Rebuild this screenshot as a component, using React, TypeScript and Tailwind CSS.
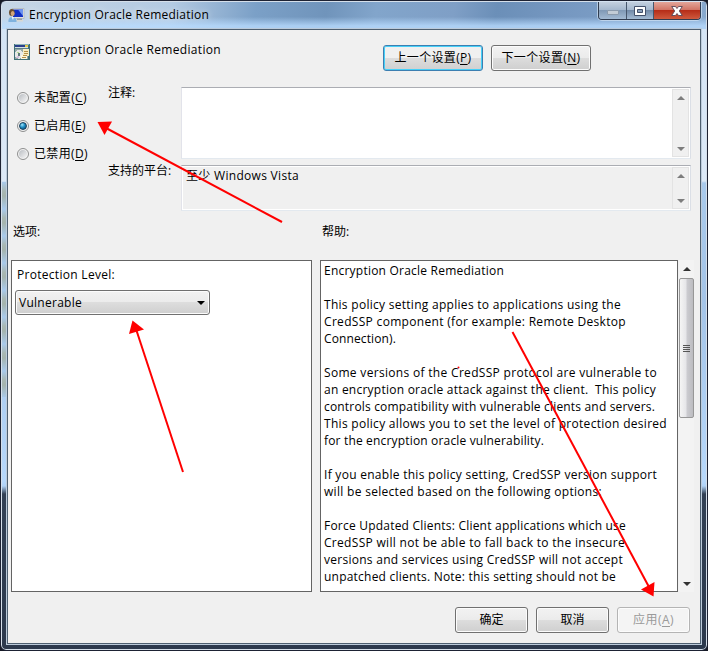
import { useLayoutEffect, useRef, useState, type ReactNode } from "react";
import clsx from "clsx";

const helpLines = [
  { text: "Encryption Oracle Remediation", width: 180 },
  { text: "", width: 0 },
  { text: "This policy setting applies to applications using the", width: 297 },
  { text: "CredSSP component (for example: Remote Desktop", width: 302 },
  { text: "Connection).", width: 72 },
  { text: "", width: 0 },
  { text: "Some versions of the CredSSP protocol are vulnerable to", width: 333 },
  { text: "an encryption oracle attack against the client.  This policy", width: 332 },
  { text: "controls compatibility with vulnerable clients and servers.", width: 331 },
  { text: "This policy allows you to set the level of protection desired", width: 343 },
  { text: "for the encryption oracle vulnerability.", width: 220 },
  { text: "", width: 0 },
  { text: "If you enable this policy setting, CredSSP version support", width: 333 },
  { text: "will be selected based on the following options:", width: 278 },
  { text: "", width: 0 },
  { text: "Force Updated Clients: Client applications which use", width: 302 },
  { text: "CredSSP will not be able to fall back to the insecure", width: 301 },
  { text: "versions and services using CredSSP will not accept", width: 299 },
  { text: "unpatched clients. Note: this setting should not be", width: 292 },
];

const states = [
  { label: "未配置", hotkey: "C", width: 53 },
  { label: "已启用", hotkey: "E", width: 52 },
  { label: "已禁用", hotkey: "D", width: 54 },
];

// Tracks the text out (or in) until it fills the given width
function FitText({ width, children }: { width: number; children: ReactNode }) {
  const ref = useRef<HTMLSpanElement>(null);
  const [spacing, setSpacing] = useState(0);

  useLayoutEffect(() => {
    const el = ref.current;
    if (!el || !width) return;
    el.style.letterSpacing = "0px";
    const natural = el.getBoundingClientRect().width;
    setSpacing((width - natural) / (el.textContent?.length || 1));
  }, [width]);

  return (
    <span ref={ref} className="inline-block whitespace-pre" style={{ letterSpacing: `${spacing}px` }}>
      {children}
    </span>
  );
}

function Hotkey({ children }: { children: string }) {
  return (
    <>
      (<span className="underline underline-offset-2">{children}</span>)
    </>
  );
}

function PushButton({
  children,
  className,
  focused,
  disabled,
}: {
  children: ReactNode;
  className?: string;
  focused?: boolean;
  disabled?: boolean;
}) {
  return (
    <button
      disabled={disabled}
      className={clsx(
        "flex h-[26px] items-center justify-center rounded-[3px] border pb-px",
        disabled && "border-[#b4b4b4] bg-[#f4f4f4] text-[#9a9a9a] shadow-[inset_0_0_0_1px_#fcfcfc]",
        focused &&
          "border-[#3c7fb1] bg-[linear-gradient(#f0f0f0_50%,#dddddd_50%,#d0d0d0)] shadow-[inset_0_0_0_1px_#46d0f8]",
        !disabled &&
          !focused &&
          "border-[#707070] bg-[linear-gradient(#f2f2f2,#ebebeb_50%,#dddddd_50%,#cfcfcf)] shadow-[inset_0_0_0_1px_#fcfcfc]",
        className
      )}
    >
      {children}
    </button>
  );
}

function Arrow({ down, faded }: { down?: boolean; faded?: boolean }) {
  return (
    <svg width="8" height="4" viewBox="0 0 8 4" fill={faded ? "#7d7d7d" : "#333333"}>
      <path d={down ? "M0 0h8L4 4z" : "M0 4h8L4 0z"} />
    </svg>
  );
}

function TextBox({ className, children }: { className: string; children?: ReactNode }) {
  return (
    <div
      className={clsx(
        "flex w-[510px] justify-between border border-t-[#abadb3] border-r-[#dbdfe6] border-b-[#e3e9ef] border-l-[#e2e3ea] shadow-[inset_0_0_0_1px_#ffffff]",
        className
      )}
    >
      <div className="pt-px pl-1">{children}</div>
      <div className="m-px flex w-[17px] flex-col items-center justify-between border border-[#e3e3e3] bg-[#f0f0f0] pt-[6px] pb-[5px]">
        <Arrow faded />
        <Arrow down faded />
      </div>
    </div>
  );
}

function Radio({ checked }: { checked: boolean }) {
  return (
    <span className="flex size-3 items-center justify-center rounded-full border border-[#8e8f8f] bg-[#f4f4f4]">
      <span
        className={clsx(
          "rounded-full",
          checked
            ? "size-2 border border-[#173f5c] bg-[radial-gradient(circle_at_35%_30%,#9fe5fb,#1b8cc4_45%,#0b3d63)]"
            : "size-2 bg-[linear-gradient(135deg,#b9bdc2,#f6f6f6)]"
        )}
      />
    </span>
  );
}

function ComputerIcon() {
  return (
    <svg width="17" height="15" viewBox="0 0 17 15">
      <path d="M4 .5h12v10H4z" fill="#e4e4e0" stroke="#a8acb0" strokeWidth=".6" />
      <path d="M5 1.500h10v7.500H5z" fill="#1230c4" />
      <path d="M10 1.500h5V8z" fill="#6c93f0" />
      <path d="M9 10.500h5v1.500H9z" fill="#9aa0a4" />
      <path d="M8 12h7v1.500H8z" fill="#d8d8d2" />
      <ellipse cx="3.800" cy="4.500" rx="2.800" ry="3.500" fill="#6a4e30" />
      <ellipse cx="4.700" cy="5.500" rx="1.900" ry="2.600" fill="#d3a678" />
      <path d="M.5 14c-.5-3 1-5 3.500-5s5 2 4.500 5z" fill="#7fb2de" />
      <path d="M3.500 9l1.500 3L6 9z" fill="#eef6fc" />
    </svg>
  );
}

function PolicyIcon() {
  return (
    <svg width="16" height="16" viewBox="0 0 16 16" shapeRendering="crispEdges">
      <path d="M0 0h16v16H0z" fill="#3f6f78" />
      <path d="M1 0h14v1H1z" fill="#8fb4b8" />
      <path d="M1 1h10v2H1z" fill="#2b3f8c" />
      <path d="M11 1h3v2h-3z" fill="#e4c948" />
      <path d="M1 3h13v1H1z" fill="#d5e2e4" />
      <path d="M1 4h13v1H1z" fill="#5d7f88" />
      <path d="M1 5h13v10H1z" fill="#94a8a6" />
      <circle cx="5" cy="10.500" r="4.300" fill="#e6e8e8" />
      <path d="M5 10.500L2 7.500h3z" fill="#b4dc92" />
      <path d="M5 10.500l-3 3h3z" fill="#d4bede" />
      <circle cx="5" cy="10.500" r="1.300" fill="#5f7a7c" />
      <path d="M9 5h6v7H9z" fill="#f8edc0" />
      <path d="M7 11h6v4H7z" fill="#fdf7dc" />
      <path d="M10 7h4v1h-4zM10 9h4v1h-4zM9 11h4v1H9zM8 13h4v1H8z" fill="#b58f48" />
    </svg>
  );
}

function TitleBar() {
  return (
    <div className="flex h-[27px] items-start justify-between bg-[linear-gradient(to_bottom,transparent_55%,#b9dcffcc_88%),linear-gradient(100deg,#c6d6e6_0%,#b3cae2_24%,#7ba0c7_36%,#7094bb_46%,#82a5cb_53%,#7f9fc6_64%,#6b8fb8_70%,#7698c1_80%,#88a9ce_100%)]">
      <div className="flex items-center gap-1 pt-[3px] pl-[6px]">
        <ComputerIcon />
        <span className="leading-5 [text-shadow:0_0_6px_#ffffffcc]">
          <FitText width={180}>Encryption Oracle Remediation</FitText>
        </span>
      </div>
      <div className="mr-[5px] flex h-[18px] overflow-hidden rounded-b-[4px] border border-t-0 border-[#303c50] shadow-[0_0_0_1px_#d3e4f5aa]">
        <button className="flex w-[28px] items-end justify-center border-r border-[#46566c] bg-[linear-gradient(#c3d0df,#a5b8ce_45%,#7f98b5_48%,#a3bad3)] pb-1">
          <span className="h-[5px] w-[12px] rounded-[1px] border border-[#8b9aac] bg-[#c3ccd6]" />
        </button>
        <button className="flex w-[27px] items-center justify-center border-r border-[#46566c] bg-[linear-gradient(#c3d0df,#a5b8ce_45%,#7088a6_48%,#a3bad3)]">
          <svg width="12" height="10" viewBox="0 0 12 10">
            <path d="M.5.5h11v9H.5z" fill="#fff" stroke="#43506a" />
            <path d="M3.500 3.500h5v3h-5z" fill="#8ba0bb" stroke="#43506a" />
          </svg>
        </button>
        <button className="flex w-[46px] items-center justify-center bg-[linear-gradient(#e3a69a,#d27566_45%,#b52c17_48%,#cf5a3e)]">
          <svg width="12" height="10" viewBox="0 0 12 10">
            <path
              d="M.7.5h3.800L6 2.500 7.500.5h3.800L8.300 5l3 4.500H7.500L6 7.500l-1.500 2H.7l3-4.500z"
              fill="#fff"
              stroke="#5a4656"
              strokeWidth=".9"
            />
          </svg>
        </button>
      </div>
    </div>
  );
}

// Red pointers drawn over the dialog
function Pointers() {
  return (
    <svg
      className="pointer-events-none absolute inset-0"
      width="708"
      height="651"
      viewBox="0 0 708 651"
      fill="#ff0000"
      stroke="#ff0000"
    >
      <g strokeWidth="2">
        <path d="M282 222L106 128" />
        <path d="M183 472L136 329" />
        <path d="M512.500 332L649 587" />
      </g>
      <g stroke="none">
        <path d="M97.500 122l14.500-.5-7.500 13.500z" />
        <path d="M132.500 320.500l11.500 9-15 4.500z" />
        <path d="M653.500 596.500l-12.500-7 13.500-7.500z" />
        <circle cx="458.500" cy="367.500" r="1" />
      </g>
    </svg>
  );
}

export default function App() {
  return (
    <div className="relative h-[651px] w-[708px] bg-[#161a26] font-['Open_Sans','Noto_Sans_CJK_SC',sans-serif] text-[12px] leading-[17px] text-black">
      <div className="flex h-[651px] flex-col overflow-hidden rounded-[6px] border border-[#1d2233] bg-[linear-gradient(#d3e3f4_0px,#dce9f7_180px,#a9caec_182px,#a4c4e8_300px,#b7d8fb_480px,#b0d2f6_485px,#334155_493px,#2c394d_100%)] shadow-[inset_0_0_0_1px_#d5dfea]">
        <div className="mx-px mt-px">
          <TitleBar />
        </div>
        <div className="flex h-[615px] pr-[6px]">
          {/* mottled glass on the left edge */}
          <div className="mt-[153px] ml-px h-[215px] w-[5px] shrink-0 bg-[repeating-linear-gradient(#a9caec_0px,#a9b8b4_9px,#a5b4ae_14px,#a9caec_27px)]" />
          <div className="flex flex-1 flex-col border border-[#4e5f70] bg-[#f0f0f0] shadow-[0_0_0_1px_#bccbdb]">
            <div className="flex pt-[15px] pl-[6px]">
              <div className="-mt-px">
                <PolicyIcon />
              </div>
              <div className="-mt-1 w-[353px] pl-2">
                <FitText width={183}>Encryption Oracle Remediation</FitText>
              </div>
              <div className="flex gap-2">
                <PushButton focused className="w-[100px]">
                  <FitText width={77}>
                    上一个设置
                    <Hotkey>P</Hotkey>
                  </FitText>
                </PushButton>
                <PushButton className="w-[100px]">
                  <FitText width={79}>
                    下一个设置
                    <Hotkey>N</Hotkey>
                  </FitText>
                </PushButton>
              </div>
            </div>

            <div className="mt-4 flex">
              <div className="flex w-[92px] flex-col gap-[11px] pt-[2px] pl-[9px]">
                {states.map((s) => (
                  <label key={s.hotkey} className="flex items-center gap-[5px]">
                    <Radio checked={s.hotkey === "E"} />
                    <FitText width={s.width}>
                      {s.label}
                      <Hotkey>{s.hotkey}</Hotkey>
                    </FitText>
                  </label>
                ))}
              </div>
              <div className="flex flex-col gap-[6px] pl-2">
                <div className="flex">
                  <div className="-mt-[3px] w-[73px]">注释:</div>
                  <TextBox className="h-[72px] bg-white" />
                </div>
                <div className="flex">
                  <div className="-mt-[3px] w-[73px]">支持的平台:</div>
                  <TextBox className="h-[46px]">
                    <FitText width={113}>至少 Windows Vista</FitText>
                  </TextBox>
                </div>
              </div>
            </div>

            <div className="mt-3 flex pl-[5px]">
              <div className="w-[309px]">选项:</div>
              <div>帮助:</div>
            </div>

            <div className="mt-5 flex h-[332px] pl-[3px]">
              <div className="mr-2 w-[301px] border border-[#646464] bg-white pt-[5px] pl-[3px]">
                <div className="pl-[2px]">
                  <FitText width={98}>Protection Level:</FitText>
                </div>
                <div className="mt-[7px] flex h-[25px] w-[195px] items-center justify-between rounded-[3px] border border-[#707070] bg-[linear-gradient(#f2f2f2,#ebebeb_50%,#dddddd_50%,#cfcfcf)] px-[3px] shadow-[inset_0_0_0_1px_#fcfcfc]">
                  <FitText width={63}>Vulnerable</FitText>
                  <svg className="mr-px" width="8" height="4" viewBox="0 0 8 4">
                    <path d="M0 0h8L4 4z" />
                  </svg>
                </div>
              </div>
              <div className="w-[358px] overflow-hidden border border-[#646464] bg-white pt-px pl-[3px]">
                {helpLines.map((line, i) => (
                  <div key={i} className="h-[17px]">
                    <FitText width={line.width}>{line.text}</FitText>
                  </div>
                ))}
              </div>
              <div className="ml-px flex w-[15px] flex-col items-center bg-[#f3f3f3] pt-[7px] pb-[6px]">
                <Arrow />
                <div className="mt-[7px] flex h-[140px] w-[15px] flex-col items-center justify-center rounded-[2px] border border-[#979797] bg-[linear-gradient(to_right,#f5f5f5,#e6e6e9_45%,#cbcbd0_55%,#bcbcc0)]">
                  <div className="flex flex-col gap-px">
                    {[0, 1, 2, 3].map((n) => (
                      <span key={n} className="h-px w-[7px] bg-[#555555]" />
                    ))}
                  </div>
                </div>
                <div className="mt-auto">
                  <Arrow down />
                </div>
              </div>
            </div>

            <div className="mt-[15px] flex justify-end gap-2 pr-[10px]">
              <PushButton className="w-[73px]">确定</PushButton>
              <PushButton className="w-[73px]">取消</PushButton>
              <PushButton disabled className="w-[73px]">
                <FitText width={41}>
                  应用
                  <Hotkey>A</Hotkey>
                </FitText>
              </PushButton>
            </div>
          </div>
        </div>
      </div>
      <Pointers />
    </div>
  );
}
